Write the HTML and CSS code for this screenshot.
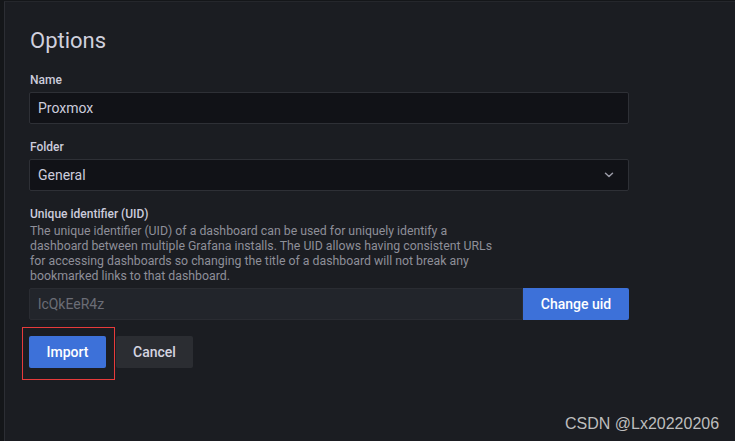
FILE: index.html
```html
<!DOCTYPE html>
<html>
<head>
<meta charset="utf-8">
<link rel="stylesheet" href="styles.css">
</head>
<body>
<div class="page">
  <div class="strip"></div>
  <main class="panel">
    <h3 class="title">Options</h3>
    <div class="field">
      <label class="label">Name</label>
      <div class="input"><span>Proxmox</span></div>
    </div>
    <div class="field">
      <label class="label">Folder</label>
      <div class="input select">
        <span>General</span>
        <svg class="chev" width="10" height="6" viewBox="0 0 10 6"><path d="M1.5 1.2 L5 4.5 L8.5 1.2" fill="none" stroke="#9a9aa6" stroke-width="1.5" stroke-linecap="round" stroke-linejoin="round"/></svg>
      </div>
    </div>
    <div class="field">
      <label class="label">Unique identifier (UID)</label>
      <p class="desc">The unique identifier (UID) of a dashboard can be used for uniquely identify a dashboard between multiple Grafana installs. The UID allows having consistent URLs for accessing dashboards so changing the title of a dashboard will not break any bookmarked links to that dashboard.</p>
      <div class="uid-row">
        <div class="input disabled"><span>lcQkEeR4z</span></div>
        <button class="btn primary addon">Change uid</button>
      </div>
    </div>
    <div class="actions">
      <button class="btn primary">Import</button>
      <button class="btn secondary">Cancel</button>
      <div class="highlight"></div>
    </div>
  </main>
  <div class="watermark">CSDN @Lx20220206</div>
</div>
</body>
</html>
```
FILE: styles.css
```css
* { box-sizing: border-box; }
html, body { margin: 0; padding: 0; }
body {
  background: #141619;
  font-family: Roboto, "Liberation Sans", sans-serif;
  color: #ccccdc;
}
.page {
  position: relative;
  display: flex;
  width: 735px;
  height: 441px;
  overflow: hidden;
  background: #141619;
}
.strip { width: 4px; flex: none; }
.panel {
  flex: 1;
  margin-top: 1px;
  border-left: 1px solid #2c2e34;
  border-top: 1px solid #25272c;
  background: #1b1d22;
  padding: 26px 0 0 24px;
}
.title {
  margin: 0 0 19px 1px;
  font-size: 22px;
  line-height: 26px;
  font-weight: 400;
  color: #d0d0dd;
}
.field { width: 600px; margin-bottom: 16px; }
.label {
  display: block;
  font-size: 12px;
  line-height: 15px;
  font-weight: 500;
  color: #ccccdc;
  margin: 0 0 4px 1px;
}
.desc {
  margin: -2px 0 4px 1px;
  max-width: 468px;
  font-size: 12.3px;
  line-height: 15px;
  color: #8e8f99;
}
.input {
  display: flex;
  align-items: center;
  height: 32px;
  padding: 0 8px;
  background: #111217;
  border: 1px solid #2e3036;
  border-radius: 2px;
  font-size: 14px;
  color: #ccccdc;
}
.select { justify-content: space-between; padding-right: 14px; }
.chev { display: block; }
.uid-row { display: flex; }
.uid-row .input { flex: 1; border-radius: 2px 0 0 2px; }
.disabled { background: #22252b; color: #6b6d76; border-color: #2a2c32; }
.btn {
  height: 32px;
  padding: 0 16px;
  border: none;
  border-radius: 2px;
  font-family: Roboto, "Liberation Sans", sans-serif;
  font-size: 14px;
  font-weight: 500;
  cursor: pointer;
}
.primary { background: #3d71d9; color: #ffffff; }
.secondary { background: #2b2d32; color: #d4d4e0; }
.addon { width: 106px; flex: none; border-radius: 0 2px 2px 0; }
.actions {
  position: relative;
  display: flex;
  gap: 10px;
}
.actions .btn { width: 77px; padding: 0; }
.highlight {
  position: absolute;
  left: -7px;
  top: -9px;
  width: 93px;
  height: 53px;
  border: 1px solid #e83b3b;
  pointer-events: none;
}
.watermark {
  position: absolute;
  left: 565px;
  top: 414px;
  font-family: "Liberation Sans", Arial, sans-serif;
  font-size: 16px;
  line-height: 20px;
  color: #bebebe;
}
```
